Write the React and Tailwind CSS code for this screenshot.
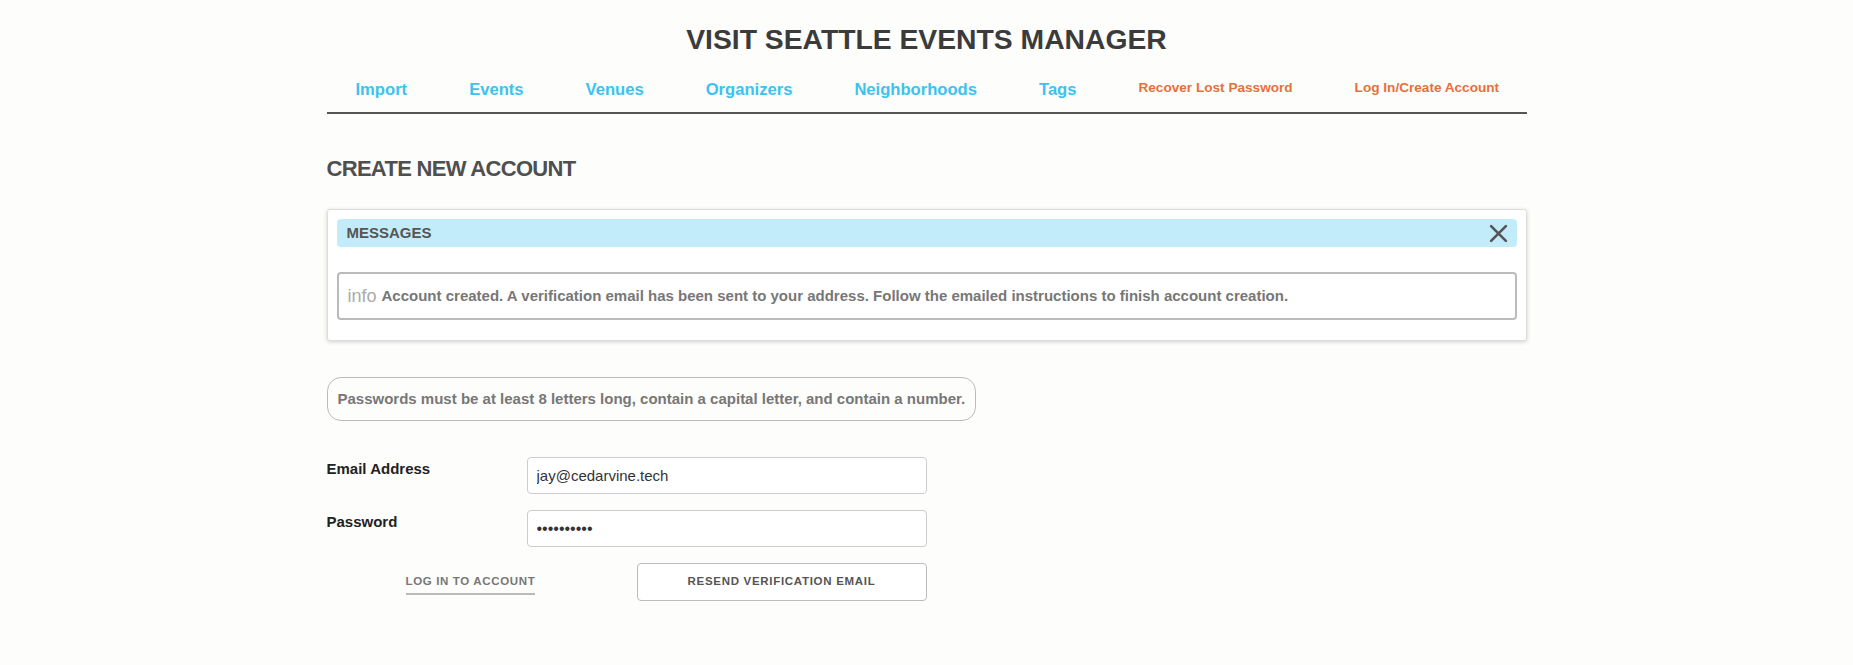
import React from "react";

const navLinks = ["Import", "Events", "Venues", "Organizers", "Neighborhoods", "Tags"];
const accountLinks = ["Recover Lost Password", "Log In/Create Account"];

export default function App() {
  return (
    <div className="min-h-screen bg-[#fdfdfb] font-['Liberation_Sans',Arial,sans-serif]">
      <div className="mx-auto w-[1200px] pb-16">
        <h1 className="pt-[22px] text-center text-[28.3px] font-bold leading-[34px] text-[#3b3b3b]">
          VISIT SEATTLE EVENTS MANAGER
        </h1>

        <nav className="mt-[21px]">
          <ul className="-ml-[2px] flex h-[26px] items-center whitespace-nowrap">
            {navLinks.map((label) => (
              <li key={label} className="shrink-0 px-[31px] text-[16.6px] font-bold text-[#3cc2f0]">
                {label}
              </li>
            ))}
            {accountLinks.map((label) => (
              <li key={label} className="mb-[4px] shrink-0 px-[31px] text-[13.6px] font-bold text-[#e6703c]">
                {label}
              </li>
            ))}
          </ul>
          <div className="mt-[9px] h-[2px] bg-[#555]" />
        </nav>

        <h2 className="mt-[42px] text-[22px] font-bold leading-[26px] tracking-[-0.7px] text-[#4f4f4f]">
          CREATE NEW ACCOUNT
        </h2>

        <div className="mt-[27px] rounded-[3px] border border-[#ddd] bg-white px-[9px] pt-[9px] pb-[20px] shadow-[0_1px_4px_rgba(0,0,0,0.18)]">
          <div className="flex h-[28px] items-center justify-between rounded-[4px] bg-[#c2ecf9] px-[10px]">
            <span className="text-[15px] font-bold text-[#555]">MESSAGES</span>
            <svg width="19" height="19" viewBox="0 0 18 18" className="mr-[-1px]">
              <path d="M2 2 L16 16 M16 2 L2 16" stroke="#555" strokeWidth="2.5" strokeLinecap="round" />
            </svg>
          </div>
          <div className="mt-[25px] flex h-[48px] items-center rounded-[4px] border-2 border-[#bbb] px-[9px]">
            <span className="mr-[5px] text-[18px] text-[#aaa]">info</span>
            <span className="text-[15px] font-bold text-[#777]">
              Account created. A verification email has been sent to your address. Follow the emailed instructions to finish account creation.
            </span>
          </div>
        </div>

        <div className="mt-[36px] flex h-[44px] w-fit items-center whitespace-nowrap rounded-[14px] border border-[#bbb] px-[10px]">
          <span className="text-[15px] font-bold text-[#777]">
            Passwords must be at least 8 letters long, contain a capital letter, and contain a number.
          </span>
        </div>

        <form className="mt-[36px] w-[600px]">
          <div className="flex">
            <label className="w-[200px] pt-[1px] text-[15px] font-bold text-[#222]">Email Address</label>
            <input
              type="email"
              defaultValue="jay@cedarvine.tech"
              className="h-[37px] w-[400px] rounded-[4px] border border-[#ccc] bg-white px-[9px] text-[15px] text-[#333] outline-none"
            />
          </div>
          <div className="mt-[16px] flex">
            <label className="w-[200px] pt-[1px] text-[15px] font-bold text-[#222]">Password</label>
            <input
              type="password"
              defaultValue="abcdefghij"
              className="h-[37px] w-[400px] rounded-[4px] border border-[#ccc] bg-white px-[9px] text-[16px] text-[#333] outline-none"
            />
          </div>
          <div className="mt-[16px] flex items-start">
            <a className="ml-[79px] mt-[10px] border-b-2 border-[#bbb] pb-[3px] text-[11.5px] font-bold tracking-[0.65px] text-[#777]">
              LOG IN TO ACCOUNT
            </a>
            <button
              type="button"
              className="ml-auto h-[38px] w-[290px] rounded-[4px] border border-[#bbb] bg-white text-[11.5px] font-bold tracking-[0.7px] text-[#555]"
            >
              RESEND VERIFICATION EMAIL
            </button>
          </div>
        </form>
      </div>
    </div>
  );
}
